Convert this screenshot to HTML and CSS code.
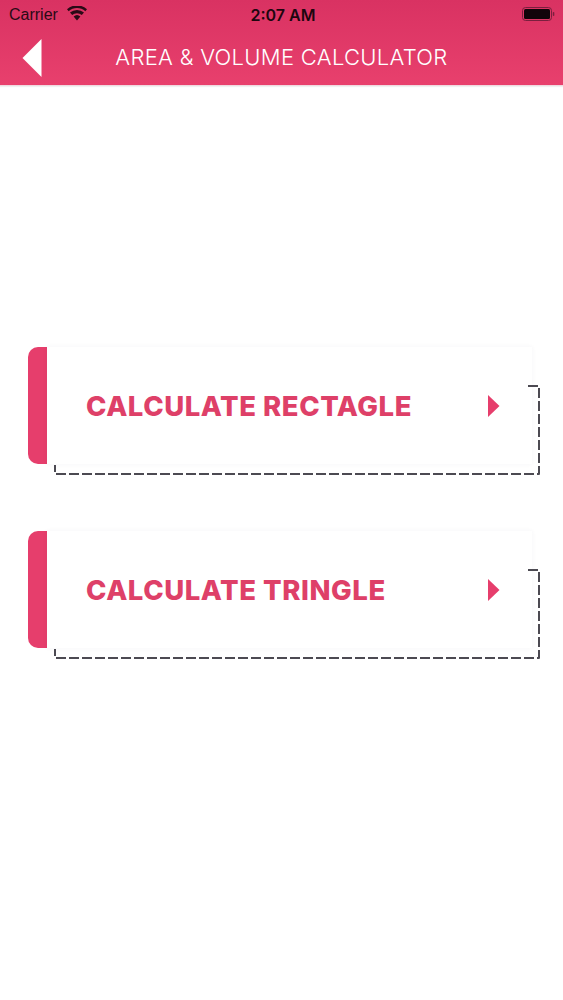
FILE: index.html
```html
<!DOCTYPE html>
<html lang="en">
<head>
<meta charset="utf-8">
<title>Area &amp; Volume Calculator</title>
<link rel="stylesheet" href="styles.css">
</head>
<body>
<header class="header">
  <div class="status">
    <div class="status-left">
      <span>Carrier</span>
      <svg class="wifi" width="20" height="15" viewBox="0 0 20 15"><path d="M10 14.500 6.600 10.600a5 5 0 0 1 6.800 0zM5.200 9.100 3 6.600a10.600 10.600 0 0 1 14 0l-2.200 2.500a7.400 7.400 0 0 0-9.600 0zM1.700 5.200 0 3.200a15 15 0 0 1 20 0l-1.700 2a12.400 12.400 0 0 0-16.600 0z" fill="#2a0a16"/></svg>
    </div>
    <div class="status-time">2:07 AM</div>
    <div class="status-right">
      <svg width="33" height="15" viewBox="0 0 33 15"><rect x="0.500" y="0.500" width="29" height="13" rx="3" fill="none" stroke="#7a1f3e"/><rect x="2" y="2" width="26" height="10" rx="1.500" fill="#12040a"/><rect x="30.800" y="5" width="1.500" height="4" rx="0.700" fill="#7a1f3e"/></svg>
    </div>
  </div>
  <div class="nav">
    <svg class="back" width="20" height="38" viewBox="0 0 20 38"><path d="M19.500 0V38L0.500 19z" fill="#fff"/></svg>
    <h1 class="title">AREA &amp; VOLUME CALCULATOR</h1>
  </div>
</header>
<main class="main">
  <a class="card">
    <svg class="dash" width="488" height="92" viewBox="0 0 488 92"><path d="M475 2H486V90H2V81" fill="none" stroke="#4c4a52" stroke-width="2" stroke-linejoin="round" stroke-dasharray="10 3"/></svg>
    <span class="bar"></span>
    <span class="face">
      <span class="label">CALCULATE RECTAGLE</span>
      <svg class="arrow" width="12" height="22" viewBox="0 0 12 22"><path d="M0 0 11.500 11 0 22z" fill="#e63e6c"/></svg>
    </span>
  </a>
  <a class="card">
    <svg class="dash" width="488" height="92" viewBox="0 0 488 92"><path d="M475 2H486V90H2V81" fill="none" stroke="#4c4a52" stroke-width="2" stroke-linejoin="round" stroke-dasharray="10 3"/></svg>
    <span class="bar"></span>
    <span class="face">
      <span class="label">CALCULATE TRINGLE</span>
      <svg class="arrow" width="12" height="22" viewBox="0 0 12 22"><path d="M0 0 11.500 11 0 22z" fill="#e63e6c"/></svg>
    </span>
  </a>
</main>
</body>
</html>
```
FILE: styles.css
```css
* { box-sizing: border-box; }
html, body { margin: 0; padding: 0; background: #fff; }
body { width: 563px; height: 1000px; overflow: hidden; font-family: "Liberation Sans", Arial, sans-serif; }
.header {
  height: 86px;
  background: linear-gradient(180deg, #d93262 0%, #e8406d 100%);
  border-bottom: 1px solid #f0d9df;
  box-shadow: 0 1px 1px rgba(0,0,0,.06);
}
.status {
  height: 29px;
  display: grid;
  grid-template-columns: 1fr auto 1fr;
  align-items: center;
  padding: 1px 9px 0;
  color: #2a0a16;
  font-size: 16px;
}
.status-left { display: flex; align-items: center; gap: 9px; }
.wifi { margin-top: -3px; }
.status-time { font-family: "Inter", sans-serif; font-weight: 600; font-size: 16px; color: #1d060f; margin-left: 3px; }
.status-right { display: flex; justify-content: flex-end; margin-right: -1px; margin-top: -1px; }
.nav { height: 56px; position: relative; display: flex; align-items: center; justify-content: center; }
.back { position: absolute; left: 21.500px; top: 10px; }
.title {
  margin: 0 0 1px;
  font-family: "Inter", sans-serif;
  font-weight: 300;
  font-size: 22px;
  letter-spacing: .3px;
  color: #fff;
  white-space: nowrap;
}
.main { display: flex; flex-direction: column; gap: 66px; padding: 261px 0 0 28px; }
.card { position: relative; display: flex; width: 512px; height: 118px; }
.bar { width: 19px; height: 117px; background: #e63e6c; border-radius: 10px 0 0 10px; flex: none; }
.face {
  width: 485px;
  height: 117px;
  display: flex;
  align-items: center;
  justify-content: space-between;
  padding: 0 32px 0 39px;
  background: #fff;
  box-shadow: 0 0 5px rgba(60,60,90,.05);
  position: relative;
}
.label {
  font-family: "Inter", sans-serif;
  font-weight: 800;
  font-size: 27.500px;
  letter-spacing: .55px;
  color: #de4068;
  white-space: nowrap;
}
.dash { position: absolute; left: 25px; top: 37px; z-index: 1; }
```
